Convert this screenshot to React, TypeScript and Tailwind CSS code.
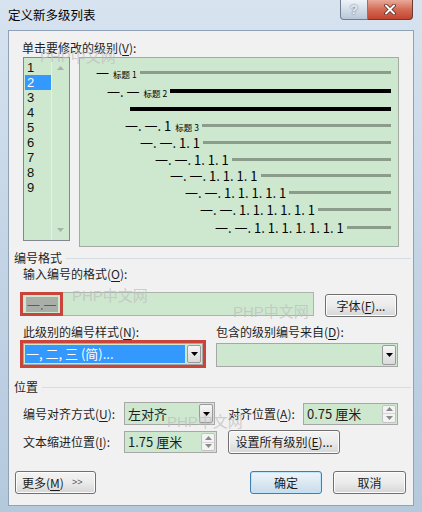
import React from "react";

const cjk = "font-['Noto_Sans_CJK_SC','Liberation_Sans',sans-serif]";

// small filled triangle used by combo boxes, spinners and scrollbars
const Caret = ({ up = false, className = "" }: { up?: boolean; className?: string }) => (
	<svg width="7" height="4" viewBox="0 0 7 4" className={className}>
		<path d={up ? "M0 4h7L3.5 0z" : "M0 0h7L3.5 4z"} fill="currentColor" />
	</svg>
);

const DropButton = () => (
	<div className="m-px flex w-[14px] items-center justify-center self-stretch rounded-[2px] border border-[#9a9a9a] bg-linear-to-b from-[#f6f6f6] to-[#dadada] text-black">
		<Caret />
	</div>
);

const Spinner = () => (
	<div className="m-px flex w-[14px] flex-col self-stretch rounded-[2px] border border-[#c3c3c3] bg-[#f3f3f3] text-[#8a8a8a]">
		<div className="flex flex-1 items-center justify-center border-b border-[#d6d6d6]">
			<Caret up />
		</div>
		<div className="flex flex-1 items-center justify-center">
			<Caret />
		</div>
	</div>
);

const Button = ({
	children,
	className = "",
	primary = false,
}: {
	children: React.ReactNode;
	className?: string;
	primary?: boolean;
}) => (
	<div
		className={`flex items-center justify-center rounded-[3px] border text-[12px] text-[#1a1a1a] ${
			primary
				? "border-[#3c7fb1] bg-linear-to-b from-[#eef5fa] to-[#c9dcea] shadow-[inset_0_0_0_1px_#bfe4fb]"
				: "border-[#707070] bg-linear-to-b from-[#f3f3f3] via-[#ebebeb] to-[#d6d6d6] shadow-[inset_0_0_0_1px_#fcfcfc]"
		} ${className}`}
	>
		{children}
	</div>
);

const Key = ({ k }: { k: string }) => (
	<>
		(<span className="underline underline-offset-2">{k}</span>)
	</>
);

const Heading = ({ children, className = "" }: { children: React.ReactNode; className?: string }) => (
	<div className={`flex h-[16px] items-center pl-[5px] pr-[2px] text-[12px] ${className}`}>
		<span>{children}</span>
		<div className="ml-[4px] h-px flex-1 bg-[#d5dde3]" />
	</div>
);

type Level = {
	row: string;
	text?: string;
	tag?: string;
	bar: string;
};

// the numbered levels drawn in the preview pane
const levels: Level[] = [
	{ row: "h-[19px] pl-[16px]", text: "一", tag: "标题 1", bar: "h-[3px] bg-[#8c9c8a]" },
	{ row: "h-[18px] pl-[27px]", text: "一. 一", tag: "标题 2", bar: "h-[4px] bg-black" },
	{ row: "h-[17px] pl-[50px]", bar: "h-[4px] bg-black" },
	{ row: "h-[17px] pl-[45px]", text: "一. 一. 1", tag: "标题 3", bar: "h-[3px] bg-[#8c9c8a]" },
	{ row: "h-[17px] pl-[60px]", text: "一. 一. 1. 1", bar: "h-[3px] bg-[#8c9c8a]" },
	{ row: "h-[16px] pl-[75px]", text: "一. 一. 1. 1. 1", bar: "h-[3px] bg-[#8c9c8a]" },
	{ row: "h-[17px] pl-[90px]", text: "一. 一. 1. 1. 1. 1", bar: "h-[3px] bg-[#8c9c8a]" },
	{ row: "h-[17px] pl-[105px]", text: "一. 一. 1. 1. 1. 1. 1", bar: "h-[3px] bg-[#8c9c8a]" },
	{ row: "h-[17px] pl-[120px]", text: "一. 一. 1. 1. 1. 1. 1. 1", bar: "h-[3px] bg-[#8c9c8a]" },
	{ row: "h-[18px] pl-[135px]", text: "一. 一. 1. 1. 1. 1. 1. 1. 1", bar: "h-[3px] bg-[#8c9c8a]" },
];

const LevelList = () => (
	<div className="flex h-[184px] w-[47px] border border-[#828790] bg-[#cde8cf]">
		<div className="flex w-[27px] flex-col pt-[2px] font-['Liberation_Sans',sans-serif] text-[13px] leading-[15px]">
			{[1, 2, 3, 4, 5, 6, 7, 8, 9].map((n) => (
				<div
					key={n}
					className={`ml-px h-[15px] w-[26px] pl-[2px] ${n === 2 ? "bg-[#3399ff] text-white" : "text-[#111]"}`}
				>
					{n}
				</div>
			))}
		</div>
		<div className="flex flex-1 flex-col items-center justify-between border-l border-[#e4f2e5] py-[8px] text-[#a7b3a7]">
			<Caret up />
			<Caret />
		</div>
	</div>
);

const Preview = () => (
	<div className="flex h-[190px] w-[320px] flex-col border border-[#a3aba3] bg-[#cde8cf] pt-[5px] pr-[7px]">
		{levels.map((l, i) => (
			<div key={i} className={`flex items-center gap-[3px] ${l.row}`}>
				{l.text && (
					<span className={`${cjk} whitespace-pre text-[13px] leading-none text-black`}>
						{l.text}
						{l.tag && <span className="ml-[4px] text-[8.5px]">{l.tag}</span>}
					</span>
				)}
				<div className={`flex-1 ${l.bar}`} />
			</div>
		))}
	</div>
);

const Watermark = ({ className }: { className: string }) => (
	<span
		className={`pointer-events-none absolute font-['Liberation_Sans','Noto_Sans_CJK_SC',sans-serif] text-[15px] leading-none text-[#bdbdbd]/70 ${className}`}
	>
		PHP中文网
	</span>
);

export default function App() {
	return (
		<div
			className={`relative flex h-[512px] w-[422px] flex-col overflow-hidden bg-linear-to-b from-[#d7e3ef] via-[#c3d4e6] to-[#b5c9dd] ${cjk} text-[#1e1e1e]`}
		>
			{/* title bar */}
			<div className="flex h-[30px] shrink-0 items-start">
				<div className="pl-[8px] pt-[6px] text-[12.5px] leading-[18px] text-black">定义新多级列表</div>
				<div className="ml-auto mr-[9px] flex h-[20px]">
					<div className="flex w-[28px] items-center justify-center rounded-bl-[4px] border border-t-0 border-[#6f7f92] bg-linear-to-b from-[#eef3f8] to-[#b8c8d9] font-['Liberation_Sans',sans-serif] text-[13px] font-bold text-[#e9eef4] [text-shadow:0_0_2px_#44556a]">
						?
					</div>
					<div className="flex w-[45px] items-center justify-center rounded-br-[4px] border border-l-0 border-t-0 border-[#6b3a32] bg-linear-to-b from-[#e9a999] via-[#d46a55] to-[#c2442e]">
						<svg width="12" height="11" viewBox="0 0 12 11">
							<path d="M2 1.5l8 8M10 1.5l-8 8" stroke="#5a2a22" strokeWidth="3.6" strokeLinecap="round" />
							<path d="M2 1.5l8 8M10 1.5l-8 8" stroke="#fff" strokeWidth="2" strokeLinecap="round" />
						</svg>
					</div>
				</div>
			</div>

			{/* client area */}
			<div className="mx-[8px] flex h-[476px] flex-col border border-[#8fa2b6] bg-[#f1f1f1]">
				<div className="h-4 pl-[13px] pt-[9px] text-[12px] leading-[16px] box-content">
					单击要修改的级别<Key k="V" />:
				</div>
				<div className="mt-px flex items-start">
					<div className="ml-[14px]">
						<LevelList />
					</div>
					<div className="ml-[9px]">
						<Preview />
					</div>
				</div>

				<Heading className="mt-[3px]">编号格式</Heading>
				<div className="h-4 pl-[14px] text-[12px] leading-[16px]">
					输入编号的格式<Key k="O" />:
				</div>
				<div className="mt-[10px] flex h-[25px] items-start">
					<div className="relative ml-[13px] flex h-[24px] w-[292px] items-center border border-[#abb5ab] bg-[#cde8cf] pl-[3px]">
						<span className="bg-[#a9aea9] px-px text-[13px] leading-[15px] text-[#5a5f5a]">一.一</span>
						<div className="pointer-events-none absolute -left-[3px] -top-px h-[24px] w-[43px] border-[3px] border-[#c9453c]" />
					</div>
					<Button className="ml-[11px] mt-[2px] h-[23px] w-[72px]">
						字体<Key k="F" />...
					</Button>
				</div>

				<div className="mt-[7px] flex h-4 text-[12px] leading-[16px]">
					<div className="w-[207px] pl-[14px]">
						此级别的编号样式<Key k="N" />:
					</div>
					<div>
						包含的级别编号来自<Key k="D" />:
					</div>
				</div>
				<div className="flex h-[28px] items-start">
					<div className="ml-[11px] h-[28px] w-[186px] border-[3px] border-[#c9453c]">
						<div className="flex h-full border border-[#a7a7a7] bg-[#cde8cf]">
							<div className="m-px flex flex-1 items-center bg-[#3399ff] pl-[1px] text-[13px] text-white">
								一, 二, 三 (简)...
							</div>
							<DropButton />
						</div>
					</div>
					<div className="ml-[10px] mt-[3px] flex h-[24px] w-[182px] border border-[#a7a7a7] bg-[#cde8cf]">
						<div className="flex-1" />
						<DropButton />
					</div>
				</div>

				<Heading className="mt-[11px]">位置</Heading>
				<div className="mt-[7px] flex h-[23px] items-center text-[12px]">
					<div className="w-[115px] pl-[14px]">
						编号对齐方式<Key k="U" />:
					</div>
					<div className="flex h-[23px] w-[91px] border border-[#a7a7a7] bg-[#cde8cf]">
						<div className="flex flex-1 items-center pl-[3px] text-[13px]">左对齐</div>
						<DropButton />
					</div>
					<div className="ml-[13px] w-[75px]">
						对齐位置<Key k="A" />:
					</div>
					<div className="flex h-[22px] w-[95px] border border-[#a7a7a7] bg-[#cde8cf]">
						<div className="flex flex-1 items-center pl-[3px] text-[13px]">0.75 厘米</div>
						<Spinner />
					</div>
				</div>
				<div className="mt-[5px] flex h-[24px] items-center text-[12px]">
					<div className="w-[115px] pl-[14px]">
						文本缩进位置<Key k="I" />:
					</div>
					<div className="flex h-[22px] w-[93px] border border-[#a7a7a7] bg-[#cde8cf]">
						<div className="flex flex-1 items-center pl-[3px] text-[13px]">1.75 厘米</div>
						<Spinner />
					</div>
					<Button className="ml-[11px] h-[24px] w-[112px]">
						设置所有级别<Key k="E" />...
					</Button>
				</div>

				<div className="mt-[17px] flex h-[23px]">
					<Button className="ml-[6px] w-[81px] justify-start pl-[6px]">
						更多<Key k="M" />
						<span className="ml-[8px] font-['Liberation_Sans',sans-serif] text-[9px] text-[#555]">&gt;&gt;</span>
					</Button>
					<Button primary className="ml-[154px] w-[72px]">
						确定
					</Button>
					<Button className="ml-[11px] w-[73px]">取消</Button>
				</div>
			</div>

			<Watermark className="left-[40px] top-[49px]" />
			<Watermark className="left-[72px] top-[288px]" />
			<Watermark className="left-[233px] top-[304px]" />
			<Watermark className="left-[167px] top-[414px]" />
		</div>
	);
}
